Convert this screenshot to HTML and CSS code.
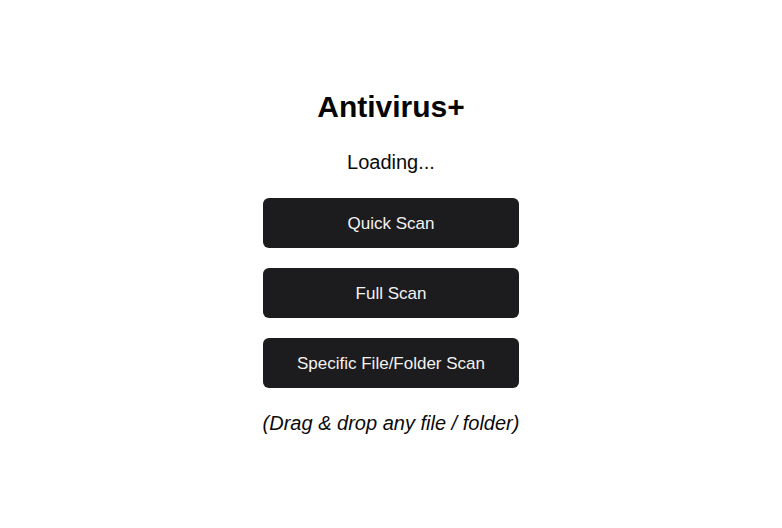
FILE: index.html
```html
<!DOCTYPE html>
<html>
<head>
<meta charset="utf-8">
<link rel="stylesheet" href="styles.css">
</head>
<body>
<main class="app">
  <h1 class="title">Antivirus+</h1>
  <p class="status">Loading...</p>
  <div class="actions">
    <button class="btn">Quick Scan</button>
    <button class="btn">Full Scan</button>
    <button class="btn">Specific File/Folder Scan</button>
  </div>
  <p class="hint">(Drag &amp; drop any file / folder)</p>
</main>
</body>
</html>
```
FILE: styles.css
```css
html, body {
  margin: 0;
  padding: 0;
  background: #ffffff;
}
body {
  font-family: "Liberation Sans", Arial, sans-serif;
  color: #0a0a0a;
}
.app {
  min-height: 528px;
  box-sizing: border-box;
  padding-bottom: 4px;
  display: flex;
  flex-direction: column;
  align-items: center;
  justify-content: center;
}
.title {
  margin: 0;
  font-size: 30px;
  line-height: 36px;
  font-weight: bold;
  color: #050505;
}
.status {
  margin: 25px 0 0;
  font-size: 20px;
  line-height: 24px;
}
.actions {
  margin-top: 24px;
  display: flex;
  flex-direction: column;
  gap: 20px;
}
.btn {
  width: 256px;
  height: 50px;
  border: none;
  border-radius: 6px;
  background: #1c1c1e;
  color: #f2f2f2;
  font-family: "Liberation Sans", Arial, sans-serif;
  font-size: 17px;
  padding: 2px 0 0;
  cursor: pointer;
}
.hint {
  margin: 23px 0 0;
  font-size: 20px;
  line-height: 24px;
  font-style: italic;
}
```
